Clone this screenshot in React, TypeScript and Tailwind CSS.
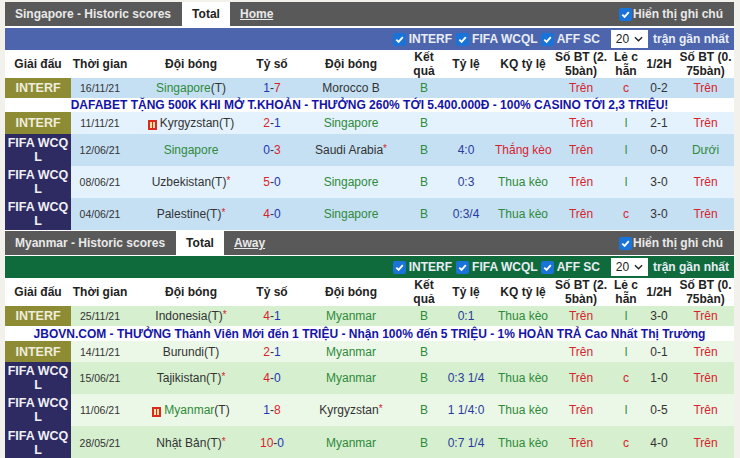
import * as React from 'react';

type Row = {
    league: 'INTERF' | 'FIFA';
    date: string;
    home: string;
    homeWin?: boolean;
    homeStar?: boolean;
    card?: boolean;
    s1: string;
    s2: string;
    c1: 'r' | 'b';
    c2: 'r' | 'b';
    away: string;
    awayWin?: boolean;
    awayStar?: boolean;
    odds?: string;
    kq?: string;
    kqWin?: boolean;
    lc: string;
    half: string;
    last: string;
};

const teamA: Row[] = [
    { league: 'INTERF', date: '16/11/21', home: 'Singapore', homeWin: true, s1: '1', s2: '7', c1: 'b', c2: 'r', away: 'Morocco B', lc: 'c', half: '0-2', last: 'Trên' },
    { league: 'INTERF', date: '11/11/21', home: 'Kyrgyzstan', card: true, s1: '2', s2: '1', c1: 'r', c2: 'b', away: 'Singapore', awayWin: true, lc: 'l', half: '2-1', last: 'Trên' },
    { league: 'FIFA', date: '12/06/21', home: 'Singapore', homeWin: true, s1: '0', s2: '3', c1: 'b', c2: 'r', away: 'Saudi Arabia', awayStar: true, odds: '4:0', kq: 'Thắng kèo', kqWin: true, lc: 'l', half: '0-0', last: 'Dưới' },
    { league: 'FIFA', date: '08/06/21', home: 'Uzbekistan', homeStar: true, s1: '5', s2: '0', c1: 'r', c2: 'b', away: 'Singapore', awayWin: true, odds: '0:3', kq: 'Thua kèo', lc: 'l', half: '3-0', last: 'Trên' },
    { league: 'FIFA', date: '04/06/21', home: 'Palestine', homeStar: true, s1: '4', s2: '0', c1: 'r', c2: 'b', away: 'Singapore', awayWin: true, odds: '0:3/4', kq: 'Thua kèo', lc: 'c', half: '3-0', last: 'Trên' },
];

const teamB: Row[] = [
    { league: 'INTERF', date: '25/11/21', home: 'Indonesia', homeStar: true, s1: '4', s2: '1', c1: 'r', c2: 'b', away: 'Myanmar', awayWin: true, odds: '0:1', kq: 'Thua kèo', lc: 'l', half: '3-0', last: 'Trên' },
    { league: 'INTERF', date: '14/11/21', home: 'Burundi', s1: '2', s2: '1', c1: 'r', c2: 'b', away: 'Myanmar', awayWin: true, lc: 'l', half: '0-1', last: 'Trên' },
    { league: 'FIFA', date: '15/06/21', home: 'Tajikistan', homeStar: true, s1: '4', s2: '0', c1: 'r', c2: 'b', away: 'Myanmar', awayWin: true, odds: '0:3 1/4', kq: 'Thua kèo', lc: 'c', half: '1-0', last: 'Trên' },
    { league: 'FIFA', date: '11/06/21', home: 'Myanmar', homeWin: true, card: true, s1: '1', s2: '8', c1: 'b', c2: 'r', away: 'Kyrgyzstan', awayStar: true, odds: '1 1/4:0', kq: 'Thua kèo', lc: 'l', half: '0-5', last: 'Trên' },
    { league: 'FIFA', date: '28/05/21', home: 'Nhật Bản', homeStar: true, s1: '10', s2: '0', c1: 'r', c2: 'b', away: 'Myanmar', awayWin: true, odds: '0:7 1/4', kq: 'Thua kèo', lc: 'c', half: '4-0', last: 'Trên' },
];

function Check() {
    return (
        <span className="inline-flex h-[13px] w-[13px] shrink-0 items-center justify-center rounded-[2px] bg-[#1a73d9]">
            <svg viewBox="0 0 12 12" className="h-[11px] w-[11px]">
                <path d="M2.5 6.2 5 8.7 9.6 3.4" fill="none" stroke="white" strokeWidth="2" />
            </svg>
        </span>
    );
}

function RedCard() {
    return (
        <span className="mr-[3px] inline-flex h-[10px] w-[9px] items-center justify-center gap-[1px] bg-[#d92a1c] align-[-1px]">
            <span className="h-[6px] w-[2px] bg-[#f7e3a8]" />
            <span className="h-[6px] w-[2px] bg-[#f7e3a8]" />
        </span>
    );
}

function TitleBar({ title, tab, titleWidth }: { title: string; tab: string; titleWidth: string }) {
    return (
        <div className="flex h-[24px] items-stretch bg-[#595959] text-[12px] font-bold text-[#e9e9e9]">
            <div className={`flex items-center pl-[10px] ${titleWidth}`}>{title}</div>
            <div className="flex w-[48px] items-center justify-center bg-white text-[#222]">Total</div>
            <div className="ml-[10px] flex flex-1 items-center underline">{tab}</div>
            <div className="flex items-center gap-[1px] pr-[11px]">
                <Check />
                <span>Hiển thị ghi chú</span>
            </div>
        </div>
    );
}

function FilterBar({ color }: { color: string }) {
    return (
        <div className={`flex h-[22px] items-center justify-end gap-[3px] pr-[5px] text-[12px] font-bold text-[#e8edf5] ${color}`}>
            <Check />
            <span className="mr-[1px]">INTERF</span>
            <Check />
            <span>FIFA WCQL</span>
            <Check />
            <span>AFF SC</span>
            <span className="ml-[8px] flex h-[18px] w-[37px] items-center justify-center gap-[5px] bg-white font-normal text-[#222]">
                20
                <svg viewBox="0 0 10 6" className="h-[6px] w-[9px]">
                    <path d="M1 1l4 4 4-4" fill="none" stroke="#222" strokeWidth="1.5" />
                </svg>
            </span>
            <span className="ml-[2px]">trận gần nhất</span>
        </div>
    );
}

function Header() {
    const th = 'font-bold text-[12px] leading-[14px] text-[#222] text-center p-0';
    return (
        <thead>
            <tr className="h-[28px] bg-white">
                <th className={th}>Giải đấu</th>
                <th className={th}>Thời gian</th>
                <th className={th}>Đội bóng</th>
                <th className={th}>Tỷ số</th>
                <th className={th}>Đội bóng</th>
                <th className={th}>Kết<br />quả</th>
                <th className={th}>Tỷ lệ</th>
                <th className={th}>KQ tỷ lệ</th>
                <th className={th}>Số BT (2.<br />5bàn)</th>
                <th className={th}>Lẻ c<br />hẵn</th>
                <th className={th}>1/2H</th>
                <th className={th}>Số BT (0.<br />75bàn)</th>
            </tr>
        </thead>
    );
}

const scoreColor = { r: 'text-[#d8232f]', b: 'text-[#2433b8]' };

function DataRow({ row, bg, h }: { row: Row; bg: string; h: string }) {
    const win = 'text-[#2f8a3a]';
    const star = <span className="align-[2px] text-[10px] leading-none text-[#d8232f]">*</span>;
    return (
        <tr className={`${bg} ${h} text-center text-[12px] leading-[14px] whitespace-nowrap text-[#333]`}>
            {row.league === 'INTERF' ? (
                <td className="bg-[#8e8b35] p-0 text-[12.5px] font-bold text-[#eeeedd]">INTERF</td>
            ) : (
                <td className="bg-[#2e2b63] p-0 text-[12.5px] leading-[14px] font-bold text-[#f0f0f5]">FIFA WCQ<br />L</td>
            )}
            <td className="p-0 text-[10.5px]">{row.date}</td>
            <td className="p-0">
                {row.card && <RedCard />}
                {row.homeWin ? <span className={win}>{row.home}</span> : row.home}
                {row.league === 'INTERF' || row.card || row.homeStar ? '(T)' : ''}
                {row.homeStar && star}
            </td>
            <td className="p-0">
                <span className={scoreColor[row.c1]}>{row.s1}</span>-<span className={scoreColor[row.c2]}>{row.s2}</span>
            </td>
            <td className="p-0">
                {row.awayWin ? <span className={win}>{row.away}</span> : row.away}
                {row.awayStar && star}
            </td>
            <td className={`p-0 ${win}`}>B</td>
            <td className="p-0 text-[#2a3a9c]">{row.odds}</td>
            <td className={`p-0 ${row.kqWin ? 'text-[#d8232f]' : win}`}>{row.kq}</td>
            <td className="p-0 text-[#d8232f]">Trên</td>
            <td className={`p-0 ${row.lc === 'c' ? 'text-[#d8232f]' : win}`}>{row.lc}</td>
            <td className="p-0">{row.half}</td>
            <td className={`p-0 ${row.last === 'Dưới' ? win : 'text-[#d8232f]'}`}>{row.last}</td>
        </tr>
    );
}

function Ad({ text, h }: { text: string; h: string }) {
    return (
        <tr className={`${h} bg-white`}>
            <td colSpan={12} className="p-0 text-center text-[12px] leading-[14px] font-bold whitespace-nowrap text-[#1414a8]">
                {text}
            </td>
        </tr>
    );
}

function Cols() {
    return (
        <colgroup>
            <col className="w-[66px]" />
            <col className="w-[58px]" />
            <col className="w-[124px]" />
            <col className="w-[38px]" />
            <col className="w-[120px]" />
            <col className="w-[26px]" />
            <col className="w-[58px]" />
            <col className="w-[56px]" />
            <col className="w-[60px]" />
            <col className="w-[30px]" />
            <col className="w-[36px]" />
            <col className="w-[57px]" />
        </colgroup>
    );
}

function ScoreTable({ rows, ad, adH, even, odd, secondH, lastH }: { rows: Row[]; ad: string; adH: string; even: string; odd: string; secondH: string; lastH: string }) {
    return (
        <table className="w-full table-fixed border-collapse">
            <Cols />
            <Header />
            <tbody>
                <DataRow row={rows[0]} bg={even} h="h-[20px]" />
                <Ad text={ad} h={adH} />
                <DataRow row={rows[1]} bg={odd} h={secondH} />
                <DataRow row={rows[2]} bg={even} h="h-[32px]" />
                <DataRow row={rows[3]} bg={odd} h="h-[32px]" />
                <DataRow row={rows[4]} bg={even} h={lastH} />
            </tbody>
        </table>
    );
}

export default function App() {
    return (
        <div className="h-[458px] w-[740px] overflow-hidden bg-[#f3f1ec] pt-[2px] pr-[6px] pl-[5px] font-['Liberation_Sans',Arial,sans-serif]">
            <TitleBar title="Singapore - Historic scores" tab="Home" titleWidth="w-[177px]" />
            <div className="h-[2px] bg-white" />
            <FilterBar color="bg-[#4d65ad]" />
            <ScoreTable
                rows={teamA}
                ad="DAFABET TẶNG 500K KHI MỞ T.KHOẢN - THƯỞNG 260% TỚI 5.400.000Đ - 100% CASINO TỚI 2,3 TRIỆU!"
                adH="h-[14px]"
                even="bg-[#c5e0f3]"
                odd="bg-[#e3f2fc]"
                secondH="h-[22px]"
                lastH="h-[32px]"
            />
            <div className="h-[1px] bg-white" />
            <TitleBar title="Myanmar - Historic scores" tab="Away" titleWidth="w-[171px]" />
            <div className="h-[1px] bg-white" />
            <FilterBar color="bg-[#0f6b3c]" />
            <ScoreTable
                rows={teamB}
                ad="JBOVN.COM - THƯỞNG Thành Viên Mới đến 1 TRIỆU - Nhận 100% đến 5 TRIỆU - 1% HOÀN TRẢ Cao Nhất Thị Trường"
                adH="h-[15px]"
                even="bg-[#d5efcf]"
                odd="bg-[#ebf7e7]"
                secondH="h-[21px]"
                lastH="h-[33px]"
            />
        </div>
    );
}
